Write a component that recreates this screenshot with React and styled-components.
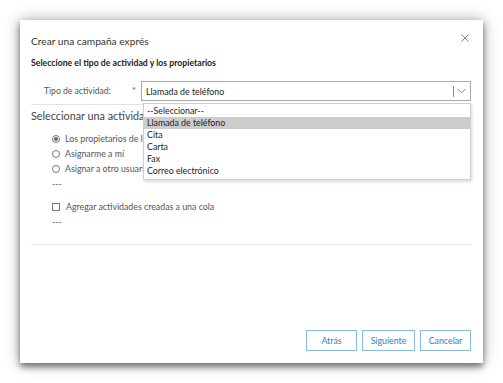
import React from "react";
import styled, { createGlobalStyle } from "styled-components";

const GlobalStyle = createGlobalStyle`
  html, body {
    margin: 0;
    padding: 0;
    background: #ffffff;
  }
  body {
    font-family: Lato, "Open Sans", sans-serif;
    color: #333;
  }
`;

const Page = styled.div`
  width: 503px;
  height: 383px;
  padding: 20px 0 0 20px;
  box-sizing: border-box;
`;

const Dialog = styled.div`
  position: relative;
  width: 463px;
  height: 343px;
  background: #fff;
  box-sizing: border-box;
  padding: 0 12px 12px 11px;
  display: flex;
  flex-direction: column;
  box-shadow: 0 4px 6px rgba(0, 0, 0, 0.45), 0 0 14px rgba(0, 0, 0, 0.35);
`;

const Header = styled.div`
  display: flex;
  align-items: center;
  justify-content: space-between;
  height: 18px;
  margin-top: 12px;
`;

const Title = styled.div`
  font-size: 10.2px;
  color: #333;
`;

const Close = styled.button`
  border: none;
  background: none;
  padding: 0;
  margin-top: -6px;
  width: 12px;
  height: 12px;
  display: flex;
  align-items: center;
  justify-content: center;
`;

const Subtitle = styled.div`
  margin-top: 7px;
  font-size: 8.7px;
  font-weight: 700;
  color: #222;
  line-height: 12px;
`;

const FieldRow = styled.div`
  position: relative;
  display: flex;
  align-items: center;
  margin-top: 12px;
  padding-bottom: 3px;
  border-bottom: 1px solid #e3e3e3;
`;

const Label = styled.div`
  width: 88px;
  padding-left: 13px;
  font-size: 8.6px;
  color: #555;
`;

const Required = styled.span`
  width: 9px;
  color: #e2312f;
  font-size: 10px;
  margin-top: -3px;
`;

const Select = styled.div`
  flex: 1;
  height: 20px;
  box-sizing: border-box;
  border: 1px solid #a9a9a9;
  display: flex;
  align-items: center;
  padding-left: 4px;
  font-size: 8.8px;
  color: #222;
`;

const SelectValue = styled.span`
  flex: 1;
`;

const Chevron = styled.div`
  display: flex;
  align-items: center;
  height: 100%;
  padding: 0 4px 0 0;
`;

const Divider = styled.div`
  width: 1px;
  height: 11px;
  background: #888;
  margin-right: 3px;
`;

const Options = styled.ul`
  position: absolute;
  left: 112px;
  right: 0;
  top: 22px;
  margin: 0;
  padding: 1px 0 2px;
  list-style: none;
  background: #fff;
  border: 1px solid #cfcfcf;
  box-shadow: 1px 2px 3px rgba(0, 0, 0, 0.15);
  z-index: 2;
`;

const Option = styled.li`
  height: 12px;
  line-height: 12px;
  padding-left: 3px;
  font-size: 8.8px;
  color: #222;
  background: ${(p) => (p.active ? "#cccccc" : "transparent")};
`;

const SectionTitle = styled.div`
  margin-top: 3px;
  font-size: 10.8px;
  color: #444;
  line-height: 16px;
  white-space: nowrap;
`;

const Choices = styled.div`
  display: flex;
  flex-direction: column;
  padding-left: 21px;
  margin-top: 7px;
`;

const Choice = styled.label`
  display: flex;
  align-items: center;
  height: 15px;
  font-size: 8.8px;
  color: #555;
  white-space: nowrap;
`;

const Radio = styled.span`
  width: 6px;
  height: 6px;
  border-radius: 50%;
  border: 1px solid #777;
  margin-right: 5px;
  display: flex;
  align-items: center;
  justify-content: center;
  &::after {
    content: "";
    width: 4px;
    height: 4px;
    border-radius: 50%;
    background: ${(p) => (p.checked ? "#666" : "transparent")};
  }
`;

const Box = styled.span`
  width: 6px;
  height: 6px;
  border: 1px solid #777;
  margin-right: 6px;
`;

const Dashes = styled.div`
  font-size: 8.8px;
  color: #555;
  height: ${(p) => p.h}px;
  line-height: 16px;
`;

const Rule = styled.div`
  margin-top: 4px;
  border-top: 1px solid #e6e6e6;
`;

const Footer = styled.div`
  margin-top: auto;
  display: flex;
  justify-content: flex-end;
  gap: 5px;
`;

const Button = styled.button`
  height: 21px;
  min-width: ${(p) => p.w}px;
  box-sizing: border-box;
  background: #fff;
  border: 1px solid #87bde3;
  color: #2f7fc1;
  font-family: inherit;
  font-size: 8.8px;
  padding: 0;
`;

export default function App() {
  const options = [
    "--Seleccionar--",
    "Llamada de teléfono",
    "Cita",
    "Carta",
    "Fax",
    "Correo electrónico",
  ];

  return (
    <>
      <GlobalStyle />
      <Page>
        <Dialog>
          <Header>
            <Title>Crear una campaña exprés</Title>
            <Close>
              <svg width="8" height="8" viewBox="0 0 8 8">
                <path d="M0.5 0.5 L7.5 7.5 M7.5 0.5 L0.5 7.5" stroke="#777" strokeWidth="0.9" />
              </svg>
            </Close>
          </Header>
          <Subtitle>Seleccione el tipo de actividad y los propietarios</Subtitle>
          <FieldRow>
            <Label>Tipo de actividad:</Label>
            <Required>*</Required>
            <Select>
              <SelectValue>Llamada de teléfono</SelectValue>
              <Chevron>
                <Divider />
                <svg width="9" height="6" viewBox="0 0 9 6">
                  <path d="M0.5 0.8 L4.5 4.8 L8.5 0.8" fill="none" stroke="#777" strokeWidth="0.9" />
                </svg>
              </Chevron>
            </Select>
            <Options>
              {options.map((o, i) => (
                <Option key={o} active={i === 1}>
                  {o}
                </Option>
              ))}
            </Options>
          </FieldRow>
          <SectionTitle>Seleccionar una actividad y los propietarios para las actividades</SectionTitle>
          <Choices>
            <Choice>
              <Radio checked />
              Los propietarios de los registros de la vista
            </Choice>
            <Choice>
              <Radio />
              Asignarme a mí
            </Choice>
            <Choice>
              <Radio />
              Asignar a otro usuario o equipo
            </Choice>
            <Dashes h={23}>---</Dashes>
            <Choice>
              <Box />
              Agregar actividades creadas a una cola
            </Choice>
            <Dashes h={26}>---</Dashes>
          </Choices>
          <Rule />
          <Footer>
            <Button w={51}>Atrás</Button>
            <Button w={53}>Siguiente</Button>
            <Button w={51}>Cancelar</Button>
          </Footer>
        </Dialog>
      </Page>
    </>
  );
}
